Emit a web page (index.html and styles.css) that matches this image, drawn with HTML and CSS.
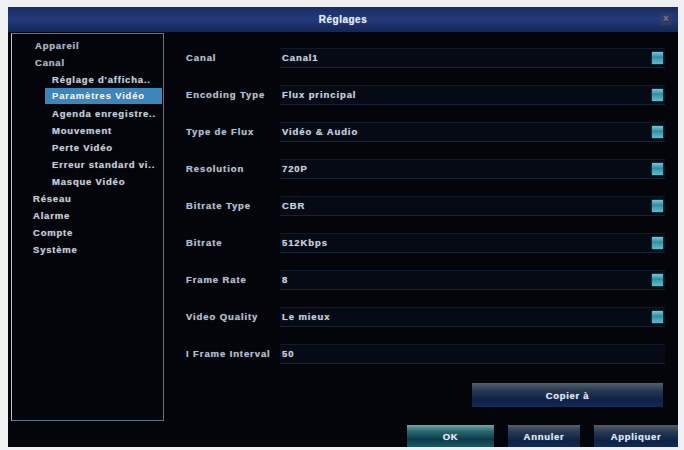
FILE: index.html
```html
<!DOCTYPE html>
<html lang="fr">
<head>
    <meta charset="UTF-8">
    <title>Réglages</title>
    <link rel="stylesheet" href="styles.css">
</head>
<body>
    <div class="window">
        <div class="titlebar">
            <span class="title">Réglages</span>
            <span class="close">×</span>
        </div>
        <div class="main">
            <div class="sidebar">
                <div class="item">Appareil</div>
                <div class="item">Canal</div>
                <div class="item sub">Réglage d'afficha..</div>
                <div class="item sub active">Paramètres Vidéo</div>
                <div class="item sub">Agenda enregistre..</div>
                <div class="item sub">Mouvement</div>
                <div class="item sub">Perte Vidéo</div>
                <div class="item sub">Erreur standard vi..</div>
                <div class="item sub">Masque Vidéo</div>
                <div class="item top">Réseau</div>
                <div class="item top">Alarme</div>
                <div class="item top">Compte</div>
                <div class="item top">Système</div>
            </div>
            <div class="content">
                <div class="row"><span class="label">Canal</span><div class="field"><span>Canal1</span><i class="drop"></i></div></div>
                <div class="row"><span class="label">Encoding Type</span><div class="field"><span>Flux principal</span><i class="drop"></i></div></div>
                <div class="row"><span class="label">Type de Flux</span><div class="field"><span>Vidéo &amp; Audio</span><i class="drop"></i></div></div>
                <div class="row"><span class="label">Resolution</span><div class="field"><span>720P</span><i class="drop"></i></div></div>
                <div class="row"><span class="label">Bitrate Type</span><div class="field"><span>CBR</span><i class="drop"></i></div></div>
                <div class="row"><span class="label">Bitrate</span><div class="field"><span>512Kbps</span><i class="drop"></i></div></div>
                <div class="row"><span class="label">Frame Rate</span><div class="field"><span>8</span><i class="drop"></i></div></div>
                <div class="row"><span class="label">Video Quality</span><div class="field"><span>Le mieux</span><i class="drop"></i></div></div>
                <div class="row"><span class="label">I Frame Interval</span><div class="field"><span>50</span></div></div>
                <div class="copy-line">
                    <button class="btn copy">Copier à</button>
                </div>
            </div>
        </div>
        <div class="footer">
            <button class="btn ok">OK</button>
            <button class="btn">Annuler</button>
            <button class="btn">Appliquer</button>
        </div>
    </div>
</body>
</html>
```

FILE: styles.css
```css
body {
    margin: 0;
    background-color: #eef0f1;
    font-family: "Liberation Sans", Arial, sans-serif;
    font-weight: bold;
    height: 450px;
    overflow: hidden;
}
.window {
    margin: 7px 0 0 8px;
    width: 670px;
    height: 440px;
    background-color: #03050b;
    display: flex;
    flex-direction: column;
}
.titlebar {
    height: 25px;
    background: linear-gradient(to bottom, #1a2c62, #23397a 50%, #142658);
    display: flex;
    align-items: center;
    justify-content: center;
    position: relative;
    flex-shrink: 0;
}
.title {
    color: #e4e8f0;
    font-size: 10px;
    letter-spacing: 0.5px;
    text-shadow: 0 0 1px #9ab;
}
.close {
    position: absolute;
    right: 6px;
    top: 6px;
    width: 12px;
    height: 12px;
    background: #2e3c62;
    color: #6f7fa2;
    font-size: 10px;
    line-height: 12px;
    text-align: center;
}
.main {
    display: flex;
    height: 390px;
    flex-shrink: 0;
}
.sidebar {
    margin: 1px 0 0 3px;
    width: 153px;
    height: 388px;
    border: 1px solid #5b7287;
    border-left-color: #b8c4cc;
    padding-top: 3px;
    box-sizing: border-box;
}
.item {
    height: 17px;
    line-height: 17px;
    font-size: 9.5px;
    letter-spacing: 0.8px;
    color: #a9b1bc;
    padding-left: 23px;
    white-space: nowrap;
    text-shadow: 0 0 1px #789;
}
.item.sub {
    padding-left: 40px;
    color: #c4cad2;
}
.item.top {
    padding-left: 21px;
    color: #c4cad2;
}
.item.active {
    margin-left: 33px;
    padding-left: 7px;
    margin-right: 1px;
    height: 16px;
    line-height: 16px;
    margin-bottom: 1px;
    background-color: #3b86ba;
    color: #f4f8fc;
}
.content {
    flex: 1;
    padding: 7px 13px 0 22px;
    display: flex;
    flex-direction: column;
}
.row {
    height: 37px;
    display: flex;
    align-items: center;
}
.label {
    width: 94px;
    font-size: 9.5px;
    letter-spacing: 0.9px;
    color: #b4bcc6;
    white-space: nowrap;
    text-shadow: 0 0 1px #789;
}
.field {
    flex: 1;
    height: 18px;
    display: flex;
    align-items: center;
    justify-content: space-between;
    background-color: #060a15;
    border-top: 1px solid #101a2a;
    border-bottom: 1px solid #182436;
    padding: 0 2px 0 2px;
    font-size: 9.5px;
    letter-spacing: 0.9px;
    color: #c8ced6;
    text-shadow: 0 0 1px #789;
}
.drop {
    width: 11px;
    height: 12px;
    background: linear-gradient(to bottom, #7cc4d4, #2f8ca2 45%, #3a9cb0 55%, #68b8c6);
    box-shadow: 0 0 2px #2a7a90;
}
.copy-line {
    display: flex;
    justify-content: flex-end;
    margin-top: 11px;
    margin-right: 2px;
}
.btn {
    font-family: "Liberation Sans", Arial, sans-serif;
    font-weight: bold;
    font-size: 9.5px;
    letter-spacing: 0.7px;
    color: #dfe6ee;
    border: none;
    padding: 0;
    background: linear-gradient(to bottom, #52606e, #2a3a52 30%, #0e2148 70%, #132a50);
    text-shadow: 0 0 1px #9ab;
}
.copy {
    width: 191px;
    height: 24px;
}
.footer {
    display: flex;
    justify-content: flex-end;
    gap: 14px;
    padding-top: 3px;
}
.footer .btn {
    width: 72px;
    height: 22px;
}
.footer .btn:last-child {
    width: 84px;
}
.footer .ok {
    width: 87px;
    background: linear-gradient(to bottom, #6aa8a8, #2a6670 30%, #0d3a4a 65%, #1a5a66);
}
```
